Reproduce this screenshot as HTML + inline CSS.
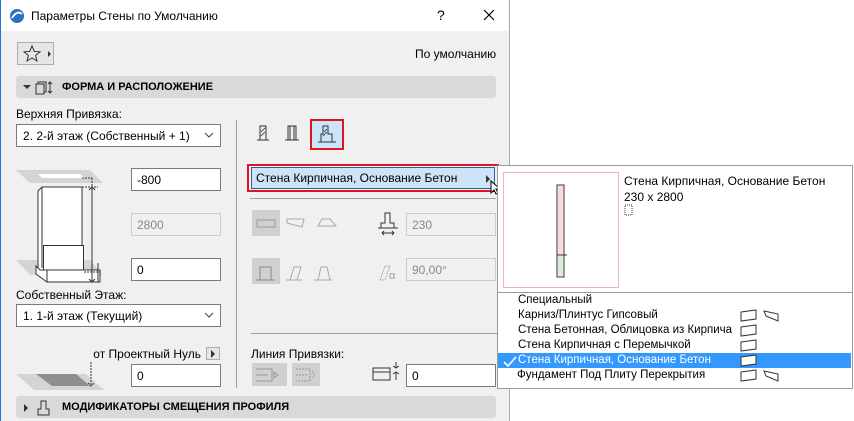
<!DOCTYPE html>
<html><head><meta charset="utf-8"><style>
*{box-sizing:border-box;margin:0;padding:0}
body{width:854px;height:421px;background:#fff;font-family:"Liberation Sans","DejaVu Sans",sans-serif;font-size:12px;color:#000;position:relative;overflow:hidden}
.a{position:absolute}
#dlg{left:0;top:0;width:510px;height:421px;background:#f0f0f0;border-left:1px solid #1e7ad6;border-right:1px solid #aaa}
.title{left:1px;top:0;width:508px;height:31px;background:#fff}
.inp{position:absolute;background:#fff;border:1px solid #7a7a7a;height:23px;padding:4px 0 0 5px;font-size:12px}
.dis{background:#f0f0f0;border-color:#ccc;color:#888}
.sel{position:absolute;background:#fff;border:1px solid #7a7a7a;height:23px;padding:4px 0 0 6px}
.sect{position:absolute;left:16px;width:480px;background:#d9d9d9;border-radius:3px;height:22px;font-weight:bold;font-size:11px;padding:5px 0 0 46px}
.li{position:absolute;left:498px;width:353px;height:15px;padding:1px 0 0 20px;font-size:11.5px}
</style></head><body>
<div id="dlg" class="a"></div>
<div class="a title"></div>
<svg class="a" style="left:9px;top:8px" width="16" height="16"><circle cx="8" cy="8" r="7" fill="#2b6fc6"/><path d="M3 10 Q8 2 13 6" stroke="#fff" stroke-width="2" fill="none"/></svg>
<div class="a" style="left:31px;top:9px;font-size:12px">Параметры Стены по Умолчанию</div>
<div class="a" style="left:437px;top:7px;font-size:14px">?</div>
<svg class="a" style="left:483px;top:9px" width="12" height="12"><path d="M1 1L11 11M11 1L1 11" stroke="#000" stroke-width="1.2"/></svg>
<div class="a" style="left:17px;top:42px;width:37px;height:23px;border:1px solid #adadad;background:#e6e6e6"></div>
<svg class="a" style="left:23px;top:45px" width="30" height="18"><path d="M9 1L11.3 6.5 17 6.8 12.6 10.5 14 16 9 13 4 16 5.4 10.5 1 6.8 6.7 6.5Z" fill="none" stroke="#333"/><path d="M25 6l3 3-3 3z" fill="#333"/></svg>
<div class="a" style="left:415px;top:47px;font-size:12px">По умолчанию</div>
<div class="sect" style="top:76px">ФОРМА И РАСПОЛОЖЕНИЕ</div>
<svg class="a" style="left:22px;top:80px" width="40" height="16"><path d="M1 5l4 4 4-4z" fill="#333"/><rect x="16" y="2" width="8" height="10" fill="none" stroke="#333"/><rect x="14" y="4" width="8" height="10" fill="#d9d9d9" stroke="#333"/><path d="M28 2v11M26 4l2-2 2 2M26 11l2 2 2-2" stroke="#333" fill="none"/></svg>
<div class="a" style="left:16px;top:107px">Верхняя Привязка:</div>
<div class="sel" style="left:16px;top:124px;width:205px">2. 2-й этаж (Собственный + 1)</div>
<svg class="a" style="left:204px;top:131px" width="10" height="8"><path d="M1 2l4 4 4-4" stroke="#444" fill="none"/></svg>
<div class="a" style="left:236px;top:120px;width:1px;height:268px;background:#a0a0a0"></div>
<svg class="a" style="left:0;top:160px" width="110" height="130">
<path d="M16 10H90L103 23H30Z" fill="#d4d4d4"/><path d="M38 14H80L85 18H42Z" fill="#fff"/>
<path d="M16 100H90L103 115H30Z" fill="#d4d4d4"/>
<path d="M38 31L42 27H82V112H42L38 108Z" fill="#fff" stroke="#333"/><path d="M42 27V108" stroke="#333"/>
<rect x="43.5" y="85.5" width="40" height="27" fill="#fff" stroke="#333"/>
<path d="M36 106L40 110H100V122H47L36 114Z" fill="#fff" stroke="#333"/><path d="M47 110V122" stroke="#333"/>
<path d="M82 18H92M82 27H98M92 18V27M84 112H100M84 122H100" stroke="#333" stroke-dasharray="2 1" fill="none"/>
<path d="M92 27V122M89 30l3-3 3 3M89 119l3 3 3-3M98 103V122" stroke="#333" fill="none"/>
</svg>
<div class="inp" style="left:131px;top:168px;width:90px">-800</div>
<div class="inp dis" style="left:131px;top:213px;width:90px">2800</div>
<div class="inp" style="left:131px;top:258px;width:90px">0</div>
<svg class="a" style="left:255px;top:122px" width="90" height="26"><rect x="5" y="4" width="6" height="14" fill="none" stroke="#333"/><path d="M6 14l4-4M6 10l4-4" stroke="#555"/><path d="M2 18H14" stroke="#333"/><rect x="33" y="4" width="8" height="14" fill="none" stroke="#333"/><path d="M35 4V18M39 4V18" stroke="#333"/><path d="M30 18H44" stroke="#333"/></svg>
<div class="a" style="left:310px;top:119px;width:34px;height:31px;border:2px solid #e0141e;background:#cce4f7"></div>
<svg class="a" style="left:316px;top:124px" width="24" height="22"><path d="M7 2h5v8h4v8H5v-8h2z" fill="none" stroke="#333"/><path d="M8 8l3-3M7 12l4-4" stroke="#555"/><path d="M2 18H20" stroke="#333"/></svg>
<div class="a" style="left:247px;top:164px;width:252px;height:28px;border:2px solid #e0141e"></div>
<div class="a" style="left:251px;top:167px;width:244px;height:22px;background:#cce4f7;border:1px solid #2a5fa0;padding:3px 0 0 4px">Стена Кирпичная, Основание Бетон</div>
<svg class="a" style="left:486px;top:173px" width="14" height="22"><path d="M0 2l4 4-4 4z" fill="#333"/><path d="M5 8v12l3-3 2 4 2-1-2-4h4z" fill="#fff" stroke="#000"/></svg>
<div class="a" style="left:250px;top:198px;width:246px;height:1px;background:#a0a0a0"></div>
<div class="a" style="left:252px;top:210px;width:28px;height:26px;background:#d0d0d0"></div>
<svg class="a" style="left:252px;top:210px" width="90" height="26"><rect x="5" y="10" width="18" height="7" fill="none" stroke="#999"/><path d="M35 9H52L50 17L35 13Z" fill="none" stroke="#aaa"/><path d="M66 16L70 9H78L84 16Z" fill="none" stroke="#aaa"/></svg>
<svg class="a" style="left:376px;top:211px" width="24" height="26"><path d="M9 2h5v10h4v5H5v-5h4z" fill="none" stroke="#333"/><path d="M2 17H22M6 22H18M6 22l2-2M6 22l2 2M18 22l-2-2M18 22l-2 2" stroke="#333" fill="none"/></svg>
<div class="inp dis" style="left:406px;top:213px;width:90px">230</div>
<div class="a" style="left:252px;top:258px;width:28px;height:26px;background:#d0d0d0"></div>
<svg class="a" style="left:252px;top:258px" width="90" height="26"><path d="M8 22V9H19V22M4 22H23" fill="none" stroke="#888"/><path d="M38 22L42 9H49L45 22M34 22H50" fill="none" stroke="#aaa"/><path d="M66 22L69 9H75L78 22M62 22H80" fill="none" stroke="#aaa"/></svg>
<svg class="a" style="left:376px;top:258px" width="24" height="26"><path d="M4 22L9 8H14L9 22Z" fill="none" stroke="#aaa" stroke-dasharray="2 1"/><text x="13" y="21" font-size="11" fill="#999" font-family="Liberation Sans">α</text></svg>
<div class="inp dis" style="left:406px;top:258px;width:90px">90,00°</div>
<div class="a" style="left:16px;top:288px">Собственный Этаж:</div>
<div class="sel" style="left:16px;top:304px;width:205px">1. 1-й этаж (Текущий)</div>
<svg class="a" style="left:204px;top:311px" width="10" height="8"><path d="M1 2l4 4 4-4" stroke="#444" fill="none"/></svg>
<div class="a" style="left:251px;top:333px;width:246px;height:1px;background:#a0a0a0"></div>
<div class="a" style="left:60px;top:347px;width:141px;text-align:right">от Проектный Нуль</div>
<div class="a" style="left:206px;top:347px;width:14px;height:13px;border:1px solid #adadad;background:#e6e6e6"></div>
<svg class="a" style="left:210px;top:350px" width="6" height="8"><path d="M1 0l4 4-4 4z" fill="#333"/></svg>
<div class="a" style="left:251px;top:347px">Линия Привязки:</div>
<svg class="a" style="left:14px;top:362px" width="92" height="40"><path d="M2 12H72L90 28H20Z" fill="#d4d4d4"/><path d="M22 12H62L76 24H38Z" fill="#8e8e8e"/><path d="M77 0V24M74 21l3 3 3-3" stroke="#333" fill="none" stroke-dasharray="2 1"/></svg>
<div class="inp" style="left:131px;top:364px;width:90px">0</div>
<div class="a" style="left:252px;top:363px;width:35px;height:23px;background:#d0d0d0"></div>
<div class="a" style="left:292px;top:363px;width:28px;height:23px;background:#d0d0d0"></div>
<svg class="a" style="left:252px;top:363px" width="70" height="23"><path d="M4 6H20V18H4M4 12H16M22 9l4 3-4 3z" fill="none" stroke="#999"/><path d="M44 6H58V18H44M44 12H56M60 8q4 4 0 8" fill="none" stroke="#999" stroke-dasharray="2 1"/></svg>
<svg class="a" style="left:371px;top:362px" width="36" height="24"><rect x="2" y="6" width="17" height="12" fill="none" stroke="#333"/><path d="M2 10H19M25 0V6M22 4l3 2 3-2M25 18V10M22 12l3-2 3 2" stroke="#333" fill="none"/></svg>
<div class="inp" style="left:406px;top:364px;width:90px">0</div>
<div class="sect" style="top:396px">МОДИФИКАТОРЫ СМЕЩЕНИЯ ПРОФИЛЯ</div>
<svg class="a" style="left:22px;top:399px" width="32" height="18"><path d="M2 5l4 4-4 4z" fill="#333"/><path d="M19 2h5v8h3v6H16v-6h3z" fill="none" stroke="#333"/></svg>
<!-- popup -->
<div class="a" style="left:497px;top:165px;width:356px;height:224px;background:#fff;border:1px solid #999"></div>
<div class="a" style="left:503px;top:172px;width:116px;height:116px;border:1px solid #f4b4b4"></div>
<svg class="a" style="left:555px;top:184px" width="14" height="94"><rect x="2" y="1" width="7" height="92" fill="none" stroke="#333"/><rect x="3" y="2" width="5" height="69" fill="#fbd9d9"/><rect x="3" y="72" width="5" height="20" fill="#d8ecd8"/><path d="M2 71H12" stroke="#333"/></svg>
<div class="a" style="left:624px;top:174px">Стена Кирпичная, Основание Бетон</div>
<div class="a" style="left:624px;top:190px">230 x 2800</div>
<svg class="a" style="left:624px;top:204px" width="10" height="12"><rect x="1" y="1" width="7" height="10" fill="#fff" stroke="#333" stroke-dasharray="1 1"/></svg>
<div class="a" style="left:497px;top:292px;width:356px;height:1px;background:#999"></div>
<div class="li" style="top:293px">Специальный</div>
<div class="li" style="top:308px">Карниз/Плинтус Гипсовый</div>
<div class="li" style="top:323px">Стена Бетонная, Облицовка из Кирпича</div>
<div class="li" style="top:338px">Стена Кирпичная с Перемычкой</div>
<div class="li" style="top:353px;background:#3399ff;color:#fff">Стена Кирпичная, Основание Бетон</div>
<svg class="a" style="left:503px;top:356px" width="14" height="12"><path d="M1 6l4 4 8-9" stroke="#fff" stroke-width="1.6" fill="none"/></svg>
<div class="li" style="top:368px;padding-left:19px">Фундамент Под Плиту Перекрытия</div>
<svg class="a" style="left:740px;top:308px" width="42" height="80">
<g fill="#fff" stroke="#333"><path d="M1 4L16 2V11L1 13Z"/><path d="M1 19L16 17V26L1 28Z"/><path d="M1 34L16 32V41L1 43Z"/><path d="M1 49L16 47V56L1 58Z"/><path d="M1 64L16 62V71L1 73Z"/>
<path d="M24 3L38 6V13L26 8Z"/><path d="M24 63L38 66V73L26 68Z"/></g></svg>
</body></html>
